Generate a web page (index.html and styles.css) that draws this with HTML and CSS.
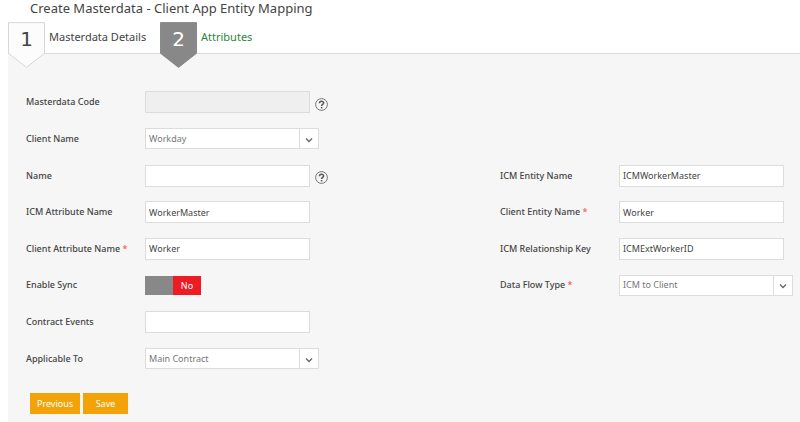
FILE: index.html
```
<!DOCTYPE html>
<html lang="en">
<head>
<meta charset="utf-8">
<title>Create Masterdata</title>
<link rel="stylesheet" href="styles.css">
</head>
<body>
<h1>Create Masterdata - Client App Entity Mapping</h1>
<nav class="steps">
  <a class="step" href="#details">
    <span class="flag"><svg viewBox="0 0 38 48" aria-hidden="true"><path d="M.5.5h37v31.500L19 46.500.5 32z" fill="#fcfcfc" stroke="#d6d6d6"/></svg><span class="num">1</span></span>
    <span class="step-name">Masterdata Details</span>
  </a>
  <a class="step active" href="#attributes">
    <span class="flag"><svg viewBox="0 0 38 48" aria-hidden="true"><path d="M.5.5h37v31.500L19 46.500.5 32z" fill="#888" stroke="#888"/></svg><span class="num">2</span></span>
    <span class="step-name">Attributes</span>
  </a>
</nav>
<form class="panel">
  <div class="fields">
    <div class="column">
      <div class="row">
        <label for="code">Masterdata Code</label>
        <input class="text" id="code" type="text" disabled>
        <button class="help" type="button" aria-label="Help"><svg viewBox="0 0 13 13"><circle cx="6.500" cy="6.500" r="5.900"/><path d="M4.500 5.200C4.500 2.700 8.600 2.700 8.600 5.100C8.600 6.500 6.600 6.400 6.600 8"/><path d="M6.600 9v1.400"/></svg></button>
      </div>
      <div class="row">
        <label for="client">Client Name</label>
        <div class="select"><select id="client"><option>Workday</option></select><span class="arrow"><svg viewBox="0 0 8 6"><path d="M1 1.500l3 3 3-3"/></svg></span></div>
      </div>
      <div class="row">
        <label for="name">Name</label>
        <input class="text" id="name" type="text">
        <button class="help" type="button" aria-label="Help"><svg viewBox="0 0 13 13"><circle cx="6.500" cy="6.500" r="5.900"/><path d="M4.500 5.200C4.500 2.700 8.600 2.700 8.600 5.100C8.600 6.500 6.600 6.400 6.600 8"/><path d="M6.600 9v1.400"/></svg></button>
      </div>
      <div class="row">
        <label for="icm-attr">ICM Attribute Name</label>
        <input class="text" id="icm-attr" type="text" value="WorkerMaster">
      </div>
      <div class="row">
        <label for="client-attr">Client Attribute Name <span class="required">*</span></label>
        <input class="text" id="client-attr" type="text" value="Worker">
      </div>
      <div class="row">
        <label for="sync">Enable Sync</label>
        <span class="toggle"><input id="sync" type="checkbox" role="switch"><span class="knob">No</span></span>
      </div>
      <div class="row">
        <label for="events">Contract Events</label>
        <input class="text" id="events" type="text">
      </div>
      <div class="row">
        <label for="applicable">Applicable To</label>
        <div class="select"><select id="applicable"><option>Main Contract</option></select><span class="arrow"><svg viewBox="0 0 8 6"><path d="M1 1.500l3 3 3-3"/></svg></span></div>
      </div>
    </div>
    <div class="column second">
      <div class="row">
        <label for="icm-entity">ICM Entity Name</label>
        <input class="text" id="icm-entity" type="text" value="ICMWorkerMaster">
      </div>
      <div class="row">
        <label for="client-entity">Client Entity Name <span class="required">*</span></label>
        <input class="text" id="client-entity" type="text" value="Worker">
      </div>
      <div class="row">
        <label for="relation">ICM Relationship Key</label>
        <input class="text" id="relation" type="text" value="ICMExtWorkerID">
      </div>
      <div class="row">
        <label for="flow">Data Flow Type <span class="required">*</span></label>
        <div class="select"><select id="flow"><option>ICM to Client</option></select><span class="arrow"><svg viewBox="0 0 8 6"><path d="M1 1.500l3 3 3-3"/></svg></span></div>
      </div>
    </div>
  </div>
  <div class="actions">
    <button class="primary" type="button">Previous</button>
    <button class="primary" type="submit">Save</button>
  </div>
</form>
</body>
</html>
```
FILE: styles.css
```
* { box-sizing: border-box; }

body {
  margin: 0;
  min-height: 100vh;
  padding-left: 8px;
  display: flex;
  flex-direction: column;
  background: #fff;
  color: #444;
  font: 9px/16px "Noto Sans", "Open Sans", sans-serif;
}

h1 {
  margin: 0;
  padding: 0 22px;
  font-size: 13px;
  line-height: 16px;
  font-weight: 400;
}

.steps {
  display: flex;
  height: 38px;
  padding-top: 6px;
  border-bottom: 1px solid #dcdcdc;
}

.step {
  display: flex;
  flex: 0 0 152px;
  gap: 4px;
  color: #444;
  text-decoration: none;
  white-space: nowrap;
}

.flag {
  position: relative;
  flex: 0 0 37px;
  height: 47px;
}

.flag svg {
  display: block;
  width: 37px;
  height: 47px;
}

.num {
  position: absolute;
  inset: 0 0 12px;
  font-family: "DejaVu Sans", sans-serif;
  font-size: 20px;
  line-height: 35px;
  text-align: center;
}

.step-name {
  font-size: 11px;
  line-height: 29px;
}

.active .num { color: #fff; }
.active .step-name { color: #2e8540; }

.panel {
  flex: 1;
  display: flex;
  flex-direction: column;
  padding: 30px 0 8px 18px;
  background: #f6f6f6;
}

.fields {
  flex: 1;
  display: grid;
  grid-template-columns: minmax(0, 1.58fr) minmax(0, 1fr);
}

.column {
  display: grid;
  grid-template-rows: repeat(8, 1fr);
}

/* The second column lines up with the third row of the first. */
.second::before {
  content: "";
  grid-row: span 2;
}

.row {
  display: flex;
  align-items: center;
}

.row label {
  flex: 0 0 119px;
  font-weight: 500;
  white-space: nowrap;
}

.required { color: #f55; }

.text,
select {
  width: 100%;
  height: 22px;
  margin: 0;
  padding: 0 3px;
  border: 1px solid #dcdcdc;
  border-radius: 0;
  background: #fff;
  color: #444;
  font: inherit;
}

.text { max-width: 165px; }
.text:disabled { background: #efefef; }

.select {
  position: relative;
  width: 100%;
  max-width: 174px;
}

select {
  display: block;
  height: 21px;
  appearance: none;
  color: #777;
}

.arrow {
  position: absolute;
  inset: 1px 1px 1px auto;
  width: 19px;
  display: grid;
  place-items: center;
  padding-top: 2px;
  border-left: 1px solid #dcdcdc;
  pointer-events: none;
}

.arrow svg {
  width: 8px;
  height: 6px;
}

.arrow path {
  fill: none;
  stroke: #666;
  stroke-width: 1.3;
}

.help {
  flex: none;
  margin: 4px 0 0 5px;
  padding: 0;
  border: 0;
  background: none;
}

.help svg {
  display: block;
  width: 13px;
  height: 13px;
  fill: none;
  stroke: #555;
}

.help circle { stroke-width: 0.8; }
.help path { stroke-width: 1.5; }

.toggle {
  position: relative;
  display: flex;
  justify-content: flex-end;
  width: 56px;
  height: 19px;
  background: #888;
}

.toggle input {
  position: absolute;
  inset: 0;
  width: 100%;
  height: 100%;
  margin: 0;
  opacity: 0;
}

.knob {
  width: 28px;
  background: #ed1c24;
  color: #fff;
  line-height: 19px;
  text-align: center;
}

.actions {
  display: flex;
  gap: 3px;
  padding: 16px 4px 0;
}

.primary {
  height: 21px;
  padding: 0 6px;
  border: 0;
  background: #f3a30a;
  color: #fff;
  font: inherit;
}

.primary:first-child { min-width: 50px; }
.primary:last-child { min-width: 45px; }
```
